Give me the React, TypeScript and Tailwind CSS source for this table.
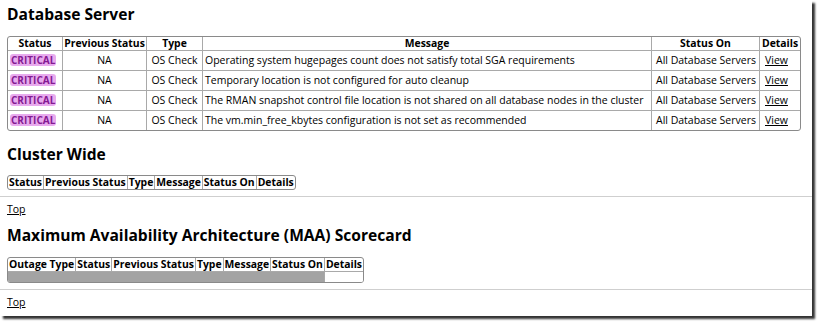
const font = "font-['Open_Sans','Liberation_Sans',sans-serif]";

const rows = [
  "Operating system hugepages count does not satisfy total SGA requirements",
  "Temporary location is not configured for auto cleanup",
  "The RMAN snapshot control file location is not shared on all database nodes in the cluster",
  "The vm.min_free_kbytes configuration is not set as recommended",
];

const cell = "border-l border-t border-[#a9a9a9] first:border-l-0";
const head = "border-l border-[#a9a9a9] first:border-l-0 px-[1px] leading-[13px] font-bold text-center whitespace-nowrap";

function Heading({ children, className = "" }: { children: string; className?: string }) {
  return (
    <h2 className={`text-[15.6px] leading-[18px] font-bold text-black ${className}`}>
      {children}
    </h2>
  );
}

function HeaderTable({ columns, className = "" }: { columns: string[]; className?: string }) {
  return (
    <div className={`w-fit border border-[#8a8a8a] rounded-[3px] overflow-hidden ${className}`}>
      <table className="border-separate border-spacing-0 text-[10.4px] text-black">
        <thead>
          <tr>
            {columns.map((c) => (
              <th key={c} className={head}>
                {c}
              </th>
            ))}
          </tr>
        </thead>
      </table>
    </div>
  );
}

export default function App() {
  return (
    <div className={`w-[818px] h-[322px] bg-white ${font}`}>
      <div className="w-[812px] h-[316px] bg-white shadow-[3px_3px_2px_rgba(0,0,0,0.8)] overflow-hidden">
        <div className="px-[7px] pt-[5px]">
          <Heading>Database Server</Heading>

          {/* Database server checks */}
          <div className="mt-[13px] w-[794px] border border-[#8a8a8a] rounded-[3px] overflow-hidden">
            <table className="w-[792px] table-fixed border-separate border-spacing-0 text-[10.5px] text-black">
              <thead>
                <tr className="text-[10.4px]">
                  <th className={`${head} w-[54px]`}>Status</th>
                  <th className={`${head} w-[84px]`}>Previous Status</th>
                  <th className={`${head} w-[56px]`}>Type</th>
                  <th className={`${head} w-[449px]`}>Message</th>
                  <th className={`${head} w-[108px]`}>Status On</th>
                  <th className={`${head} w-[41px]`}>Details</th>
                </tr>
              </thead>
              <tbody>
                {rows.map((msg) => (
                  <tr key={msg}>
                    <td className={`${cell} pl-[2px] py-[3px] leading-[13px]`}>
                      <span className="inline-block rounded-[3px] bg-[#e8aaee] px-[1px] text-[10px] leading-[12px] font-bold text-[#851a93]">
                        CRITICAL
                      </span>
                    </td>
                    <td className={`${cell} py-[3px] leading-[13px] text-center`}>NA</td>
                    <td className={`${cell} py-[3px] leading-[13px] text-center whitespace-nowrap`}>OS Check</td>
                    <td className={`${cell} px-[2px] py-[3px] leading-[13px] whitespace-nowrap`}>{msg}</td>
                    <td className={`${cell} px-[4px] py-[3px] leading-[13px] whitespace-nowrap`}>All Database Servers</td>
                    <td className={`${cell} px-[5px] py-[3px] leading-[13px]`}>
                      <a className="underline text-black">View</a>
                    </td>
                  </tr>
                ))}
              </tbody>
            </table>
          </div>

          <Heading className="mt-[14px]">Cluster Wide</Heading>
          <HeaderTable
            className="mt-[12px]"
            columns={["Status", "Previous Status", "Type", "Message", "Status On", "Details"]}
          />
        </div>

        <hr className="mt-[6px] border-t border-[#cfcfcf]" />
        <div className="px-[7px]">
          <a className="block mt-[6px] text-[10.5px] leading-[13px] underline text-black w-fit">Top</a>

          <Heading className="mt-[10px]">Maximum Availability Architecture (MAA) Scorecard</Heading>

          {/* MAA scorecard, no rows yet */}
          <div className="mt-[13px] w-fit border border-[#8a8a8a] rounded-[3px] overflow-hidden">
            <table className="border-separate border-spacing-0 text-[10.4px] text-black">
              <thead>
                <tr>
                  {["Outage Type", "Status", "Previous Status", "Type", "Message", "Status On", "Details"].map((c) => (
                    <th key={c} className={head}>
                      {c}
                    </th>
                  ))}
                </tr>
              </thead>
              <tbody>
                <tr>
                  <td colSpan={6} className="h-[11px] border-t border-[#a9a9a9] bg-[#a3a3a3]" />
                  <td className="h-[11px] border-t border-l border-[#a9a9a9] bg-white" />
                </tr>
              </tbody>
            </table>
          </div>
        </div>

        <hr className="mt-[6px] border-t border-[#cfcfcf]" />
        <div className="px-[7px]">
          <a className="block mt-[6px] text-[10.5px] leading-[13px] underline text-black w-fit">Top</a>
        </div>
      </div>
    </div>
  );
}
